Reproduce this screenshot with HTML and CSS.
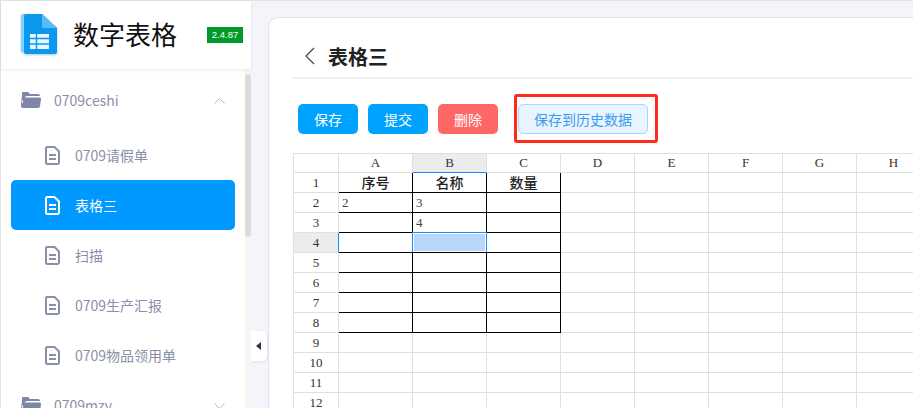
FILE: index.html
```html
<!DOCTYPE html>
<html lang="zh">
<head>
    <meta charset="UTF-8">
    <title>数字表格</title>
    <link rel="stylesheet" href="styles.css">
</head>
<body>
    <div class="app">
        <aside class="sidebar">
            <div class="brand">
                <svg class="brand-logo" width="40" height="44" viewBox="0 0 40 44">
                    <path d="M3 1h18l12 12v24a2 2 0 0 1-2 2H3a2 2 0 0 1-2-2V3a2 2 0 0 1 2-2z" fill="#7fd0fb"/>
                    <path d="M6 1h16l15 14v24a2 2 0 0 1-2 2H6a2 2 0 0 1-2-2V3a2 2 0 0 1 2-2z" fill="#0a99ee"/>
                    <path d="M22 1l15 14H24a2 2 0 0 1-2-2z" fill="#58bdf7"/>
                    <path d="M10 21h19v15H10z" fill="#fff" opacity=".9"/>
                    <path d="M10 25.500h19M10 31h19M16.500 21v15" stroke="#0a99ee" stroke-width="1.400" fill="none"/>
                </svg>
                <span class="brand-name">数字表格</span>
                <span class="version">2.4.87</span>
            </div>
            <div class="menu-wrap">
                <nav class="menu">
                    <div class="group">
                        <svg class="folder" width="20" height="16" viewBox="0 0 20 16"><path d="M2 0h5l2 2h8a2 2 0 0 1 2 2H6a2 2 0 0 0-2 2L3 10 1 8V1a1 1 0 0 1 1-1z" fill="#7f87a8"/><path d="M5 5.500h13.500a1.500 1.500 0 0 1 1.500 1.700l-1 7a2 2 0 0 1-2 1.800H2a2 2 0 0 1-2-2V4l1 8 2.500-5.300A2 2 0 0 1 5 5.500z" fill="#7f87a8"/></svg>
                        <span>0709ceshi</span>
                        <svg class="caret" width="11" height="6" viewBox="0 0 11 6"><path d="M.5 5.500l5-5 5 5" fill="none" stroke="#b4b8c6"/></svg>
                    </div>
                    <a class="item">
                        <svg class="doc" width="15" height="19" viewBox="0 0 15 19"><path d="M2 1h7.500L14 5.500V16.500a1.500 1.500 0 0 1-1.500 1.500h-10A1.500 1.500 0 0 1 1 16.500v-14A1.500 1.500 0 0 1 2 1zM4 9h7M4 13h7" fill="none" stroke="currentColor" stroke-width="2"/></svg>
                        <span>0709请假单</span>
                    </a>
                    <a class="item active">
                        <svg class="doc" width="15" height="19" viewBox="0 0 15 19"><path d="M2 1h7.500L14 5.500V16.500a1.500 1.500 0 0 1-1.500 1.500h-10A1.500 1.500 0 0 1 1 16.500v-14A1.500 1.500 0 0 1 2 1zM4 9h7M4 13h7" fill="none" stroke="currentColor" stroke-width="2"/></svg>
                        <span>表格三</span>
                    </a>
                    <a class="item">
                        <svg class="doc" width="15" height="19" viewBox="0 0 15 19"><path d="M2 1h7.500L14 5.500V16.500a1.500 1.500 0 0 1-1.500 1.500h-10A1.500 1.500 0 0 1 1 16.500v-14A1.500 1.500 0 0 1 2 1zM4 9h7M4 13h7" fill="none" stroke="currentColor" stroke-width="2"/></svg>
                        <span>扫描</span>
                    </a>
                    <a class="item">
                        <svg class="doc" width="15" height="19" viewBox="0 0 15 19"><path d="M2 1h7.500L14 5.500V16.500a1.500 1.500 0 0 1-1.500 1.500h-10A1.500 1.500 0 0 1 1 16.500v-14A1.500 1.500 0 0 1 2 1zM4 9h7M4 13h7" fill="none" stroke="currentColor" stroke-width="2"/></svg>
                        <span>0709生产汇报</span>
                    </a>
                    <a class="item">
                        <svg class="doc" width="15" height="19" viewBox="0 0 15 19"><path d="M2 1h7.500L14 5.500V16.500a1.500 1.500 0 0 1-1.500 1.500h-10A1.500 1.500 0 0 1 1 16.500v-14A1.500 1.500 0 0 1 2 1zM4 9h7M4 13h7" fill="none" stroke="currentColor" stroke-width="2"/></svg>
                        <span>0709物品领用单</span>
                    </a>
                    <div class="group">
                        <svg class="folder" width="20" height="16" viewBox="0 0 20 16"><path d="M2 0h5l2 2h8a2 2 0 0 1 2 2H6a2 2 0 0 0-2 2L3 10 1 8V1a1 1 0 0 1 1-1z" fill="#7f87a8"/><path d="M5 5.500h13.500a1.500 1.500 0 0 1 1.500 1.700l-1 7a2 2 0 0 1-2 1.800H2a2 2 0 0 1-2-2V4l1 8 2.500-5.300A2 2 0 0 1 5 5.500z" fill="#7f87a8"/></svg>
                        <span>0709mzy</span>
                        <svg class="caret" width="11" height="6" viewBox="0 0 11 6"><path d="M.5 .5l5 5 5-5" fill="none" stroke="#b4b8c6"/></svg>
                    </div>
                </nav>
                <div class="scrollbar"><div class="thumb"></div></div>
            </div>
            <button class="collapse"><span class="arrow"></span></button>
        </aside>

        <main class="main">
            <div class="card">
                <div class="title-row">
                    <svg class="back" width="10" height="18" viewBox="0 0 10 18"><path d="M9 1L1 9l8 8" fill="none" stroke="#444" stroke-width="1.200"/></svg>
                    <h1>表格三</h1>
                </div>
                <div class="toolbar">
                    <button class="btn">保存</button>
                    <button class="btn">提交</button>
                    <button class="btn btn-red">删除</button>
                    <div class="marked">
                        <button class="btn-plain">保存到历史数据</button>
                        <span class="mark"></span>
                    </div>
                </div>
                <div class="sheet">
                    <table>
                        <thead>
                            <tr><th class="rh"></th><th>A</th><th class="hl-col">B</th><th>C</th><th>D</th><th>E</th><th>F</th><th>G</th><th>H</th></tr>
                        </thead>
                        <tbody>
                            <tr><th class="rh">1</th><td class="b head">序号</td><td class="b head">名称</td><td class="b head">数量</td><td></td><td></td><td></td><td></td><td></td></tr>
                            <tr><th class="rh">2</th><td class="b">2</td><td class="b">3</td><td class="b"></td><td></td><td></td><td></td><td></td><td></td></tr>
                            <tr><th class="rh">3</th><td class="b"></td><td class="b">4</td><td class="b"></td><td></td><td></td><td></td><td></td><td></td></tr>
                            <tr><th class="rh hl-row">4</th><td class="b"></td><td class="b sel"></td><td class="b"></td><td></td><td></td><td></td><td></td><td></td></tr>
                            <tr><th class="rh">5</th><td class="b"></td><td class="b"></td><td class="b"></td><td></td><td></td><td></td><td></td><td></td></tr>
                            <tr><th class="rh">6</th><td class="b"></td><td class="b"></td><td class="b"></td><td></td><td></td><td></td><td></td><td></td></tr>
                            <tr><th class="rh">7</th><td class="b"></td><td class="b"></td><td class="b"></td><td></td><td></td><td></td><td></td><td></td></tr>
                            <tr><th class="rh">8</th><td class="b"></td><td class="b"></td><td class="b"></td><td></td><td></td><td></td><td></td><td></td></tr>
                            <tr><th class="rh">9</th><td></td><td></td><td></td><td></td><td></td><td></td><td></td><td></td></tr>
                            <tr><th class="rh">10</th><td></td><td></td><td></td><td></td><td></td><td></td><td></td><td></td></tr>
                            <tr><th class="rh">11</th><td></td><td></td><td></td><td></td><td></td><td></td><td></td><td></td></tr>
                            <tr><th class="rh">12</th><td></td><td></td><td></td><td></td><td></td><td></td><td></td><td></td></tr>
                        </tbody>
                    </table>
                </div>
            </div>
        </main>
    </div>
</body>
</html>
```

FILE: styles.css
```css
* {
    box-sizing: border-box;
}

html, body {
    margin: 0;
    height: 408px;
    overflow: hidden;
}

body {
    font-family: "Noto Sans CJK SC", "Noto Sans", sans-serif;
    background-color: #F3F5FA;
}

.app {
    display: flex;
    height: 408px;
    border-top: 1px solid #e4e4e4;
    border-left: 1px solid #e4e4e4;
}

/* sidebar */
.sidebar {
    position: relative;
    flex: 0 0 250px;
    display: flex;
    flex-direction: column;
    background-color: white;
}

.brand {
    flex: 0 0 68px;
    display: flex;
    align-items: center;
    padding-left: 19px;
    box-shadow: 0 1px 4px rgba(0, 0, 0, 0.08);
    z-index: 1;
}

.brand-logo {
    flex: none;
    filter: drop-shadow(0 1px 1px rgba(0, 60, 120, 0.3));
}

.brand-name {
    margin: -2px 0 0 13px;
    font-size: 26px;
    line-height: 36px;
    color: #111;
    width: 134px;
}

.version {
    width: 36px;
    height: 16px;
    background-color: #009a29;
    color: white;
    font-family: "Liberation Sans", sans-serif;
    font-size: 9.5px;
    line-height: 16px;
    text-align: center;
}

.menu-wrap {
    flex: 1;
    display: flex;
    min-height: 0;
}

.menu {
    flex: 0 0 244px;
    padding-top: 6px;
    overflow: hidden;
}

.group {
    display: flex;
    align-items: center;
    height: 50px;
    margin-bottom: 5px;
    padding: 0 20px;
    color: #8a8fa8;
    font-size: 14px;
}

.group span {
    margin-left: 13px;
}

.group .caret {
    margin: 2px 0 0 auto;
}

.item {
    display: flex;
    align-items: center;
    height: 50px;
    margin: 0 10px;
    padding-left: 34px;
    border-radius: 5px;
    color: #8a8fa8;
    font-size: 14px;
}

.item span {
    margin-left: 15px;
}

.item .doc {
    color: #8a8fa8;
}

.item.active {
    background-color: #0099FF;
    color: white;
}

.item.active .doc {
    color: white;
}

.scrollbar {
    flex: 0 0 6px;
    padding-top: 5px;
    background-color: #f6f6f6;
}

.thumb {
    height: 163px;
    background-color: #dcdcdc;
    border-radius: 3px;
}

.collapse {
    position: absolute;
    left: 250px;
    top: 330px;
    width: 16px;
    height: 30px;
    padding: 0;
    border: none;
    border-radius: 0 5px 5px 0;
    background-color: white;
    box-shadow: 1px 1px 3px rgba(0, 0, 0, 0.08);
    z-index: 2;
}

.arrow {
    display: block;
    width: 0;
    height: 0;
    margin-left: 5px;
    border-top: 4px solid transparent;
    border-bottom: 4px solid transparent;
    border-right: 5px solid #2c3350;
}

/* main area */
.main {
    flex: 1;
    min-width: 0;
    padding: 16px 0 0 17px;
}

.card {
    height: 420px;
    padding-left: 24px;
    background-color: white;
    border: 1px solid #e0e4ec;
    border-right: none;
    border-radius: 10px 0 0 0;
    overflow: hidden;
}

.title-row {
    display: flex;
    align-items: center;
    height: 61px;
    padding: 17px 0 0 12px;
    border-bottom: 2px solid #f0f0f0;
}

.title-row h1 {
    margin: 0 0 0 13px;
    font-size: 20px;
    font-weight: 700;
    color: #222;
}

.toolbar {
    display: flex;
    align-items: flex-start;
    gap: 10px;
    margin: 25px 0 19px 5px;
}

.btn {
    width: 60px;
    height: 30px;
    padding: 0;
    border: none;
    border-radius: 5px;
    background-color: #00A2FF;
    color: white;
    font-family: inherit;
    font-size: 14px;
}

.btn-red {
    background-color: #FF6666;
}

.marked {
    position: relative;
    margin-left: 10px;
}

.btn-plain {
    display: block;
    width: 130px;
    height: 30px;
    padding: 0;
    border: 1px solid #a8d6ff;
    border-radius: 5px;
    background-color: #e8f4ff;
    color: #3c9cf0;
    font-family: inherit;
    font-size: 14px;
}

.mark {
    position: absolute;
    left: -4px;
    right: -10px;
    top: -10px;
    bottom: -9px;
    border: 3px solid #ff2a1a;
    border-radius: 3px;
}

/* spreadsheet */
.sheet {
    overflow: hidden;
}

table {
    table-layout: fixed;
    width: 638px;
    border-collapse: separate;
    border-spacing: 0;
    font-family: "Liberation Serif", "Noto Sans CJK SC", serif;
    font-size: 13px;
    color: #333;
}

th, td {
    width: 74px;
    height: 20px;
    padding: 0;
    border-right: 1px solid #e0e0e0;
    border-bottom: 1px solid #e0e0e0;
    font-weight: normal;
    line-height: 19px;
    overflow: visible;
}

thead th {
    line-height: 18px;
    border-top: 1px solid #e0e0e0;
}

th.rh {
    width: 46px;
    border-left: 1px solid #e0e0e0;
}

td {
    padding-left: 3px;
    color: #444;
}

td.b {
    border-right-color: black;
    border-bottom-color: black;
}

td.head {
    padding-left: 0;
    text-align: center;
    font-family: "Noto Sans CJK SC", sans-serif;
    font-size: 14px;
    font-weight: 500;
    color: #222;
}

.hl-col {
    background-color: #ececec;
    border-bottom-color: #1a8cff;
}

.hl-row {
    background-color: #ececec;
    border-right-color: #1a8cff;
}

.sel {
    position: relative;
    background-color: #b8d6fa;
    box-shadow: inset 0 0 0 1px white;
}

.sel::after {
    content: "";
    position: absolute;
    left: -1px;
    right: -1px;
    top: -1px;
    bottom: 0;
    border: 1px solid #1a8cff;
    border-bottom: none;
}
```
